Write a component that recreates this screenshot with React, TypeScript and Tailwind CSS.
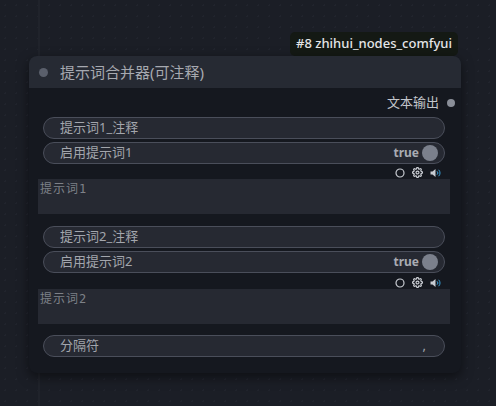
import React from 'react';

const FONT = { fontFamily: '"Noto Sans", "Noto Sans CJK SC", sans-serif' };
const MONO = { fontFamily: '"DejaVu Sans Mono", "Noto Sans CJK SC", monospace' };

function Pill({ label, value, toggle }: { label: string; value?: string; toggle?: boolean }) {
  return (
    <div className="mx-[14px] mr-[16px] flex h-[22px] items-center justify-between rounded-full border border-[#4a4e5a] bg-[#262932] pl-[16px] pr-[6px] text-[13px] text-[#a3a6ad]">
      <span>{label}</span>
      {toggle ? (
        <span className="flex items-center gap-[3px]">
          <span className="text-[12px] font-bold text-[#a9acb3]">true</span>
          <span className="h-[16px] w-[16px] rounded-full bg-[#7b808c]" />
        </span>
      ) : (
        <span className="pr-[12px] text-[#a3a6ad]">{value}</span>
      )}
    </div>
  );
}

function IconRow() {
  return (
    <div className="mr-[20px] flex h-[13px] items-center justify-end gap-[7px]">
      <svg width="10" height="10" viewBox="0 0 10 10">
        <circle cx="5" cy="5" r="4" fill="none" stroke="#c9ccd2" strokeWidth="1.2" />
      </svg>
      <svg width="11" height="11" viewBox="0 0 24 24" fill="none" stroke="#c9ccd2" strokeWidth="2.6">
        <circle cx="12" cy="12" r="3.2" />
        <path d="M19.4 15a1.65 1.65 0 0 0 .33 1.82l.06.06a2 2 0 1 1-2.83 2.83l-.06-.06a1.65 1.65 0 0 0-1.82-.33 1.65 1.65 0 0 0-1 1.51V21a2 2 0 1 1-4 0v-.09A1.65 1.65 0 0 0 9 19.4a1.65 1.65 0 0 0-1.82.33l-.06.06a2 2 0 1 1-2.83-2.83l.06-.06A1.65 1.65 0 0 0 4.68 15a1.65 1.65 0 0 0-1.51-1H3a2 2 0 1 1 0-4h.09A1.65 1.65 0 0 0 4.6 9a1.65 1.65 0 0 0-.33-1.82l-.06-.06a2 2 0 1 1 2.83-2.83l.06.06A1.65 1.65 0 0 0 9 4.68 1.65 1.65 0 0 0 10 3.17V3a2 2 0 1 1 4 0v.09a1.65 1.65 0 0 0 1 1.51 1.65 1.65 0 0 0 1.82-.33l.06-.06a2 2 0 1 1 2.83 2.83l-.06.06A1.65 1.65 0 0 0 19.4 9a1.65 1.65 0 0 0 1.51 1H21a2 2 0 1 1 0 4h-.09a1.65 1.65 0 0 0-1.51 1z" />
      </svg>
      <svg width="11" height="10" viewBox="0 0 11 10">
        <path d="M0.5 3.5h2l3-2.5v8l-3-2.5h-2z" fill="#c9ccd2" />
        <path d="M7 3.3a2.2 2.2 0 0 1 0 3.4" fill="none" stroke="#3aa0d8" strokeWidth="1" />
        <path d="M8.6 1.8a4.3 4.3 0 0 1 0 6.4" fill="none" stroke="#3aa0d8" strokeWidth="1" />
      </svg>
    </div>
  );
}

function TextArea({ text }: { text: string }) {
  return (
    <div className="ml-[9px] mr-[11px] h-[35px] bg-[#262932] px-[2px] pt-[1px] text-[12px] tracking-[1px] text-[#7e8188]" style={MONO}>
      {text}
    </div>
  );
}

export default function App() {
  return (
    <div
      className="relative h-[406px] w-[496px] overflow-hidden bg-[#1b1e26]"
      style={{
        ...FONT,
        backgroundImage:
          'linear-gradient(to right, transparent 38px, #20232b 38px, #20232b 40px, transparent 40px), radial-gradient(#21242d 1px, transparent 1px)',
        backgroundSize: '100% 100%, 11px 11px',
      }}
    >
      <div className="absolute left-[290px] top-[32px] rounded-[5px] bg-[#141914] px-[6px] py-[2px] text-[13px] font-medium text-[#e4e6e8]">
        #8 zhihui_nodes_comfyui
      </div>

      <div className="absolute left-[29px] top-[56px] w-[432px] overflow-hidden rounded-[8px] bg-[#15181f] shadow-[0_4px_12px_rgba(0,0,0,0.5)]">
        <div className="flex h-[32px] items-center bg-[#262a33] pl-[10px]">
          <span className="h-[9px] w-[9px] rounded-full bg-[#5a5f6b]" />
          <span className="ml-[12px] text-[15px] text-[#a6a9b0]">提示词合并器(可注释)</span>
        </div>

        <div className="flex flex-col pb-[16px] pt-[7px]">
          <div className="flex h-[16px] items-center justify-end pr-[6px] text-[13px] text-[#c3c6cc]">
            <span>文本输出</span>
            <span className="ml-[8px] h-[8px] w-[8px] rounded-full bg-[#8a8e98]" />
          </div>

          <div className="mt-[6px] flex flex-col gap-[3px]">
            <Pill label="提示词1_注释" />
            <Pill label="启用提示词1" toggle />
          </div>
          <div className="mt-[2px]">
            <IconRow />
          </div>
          <TextArea text="提示词1" />

          <div className="mt-[12px] flex flex-col gap-[3px]">
            <Pill label="提示词2_注释" />
            <Pill label="启用提示词2" toggle />
          </div>
          <div className="mt-[3px]">
            <IconRow />
          </div>
          <TextArea text="提示词2" />

          <div className="mt-[11px]">
            <Pill label="分隔符" value="," />
          </div>
        </div>
      </div>
    </div>
  );
}
